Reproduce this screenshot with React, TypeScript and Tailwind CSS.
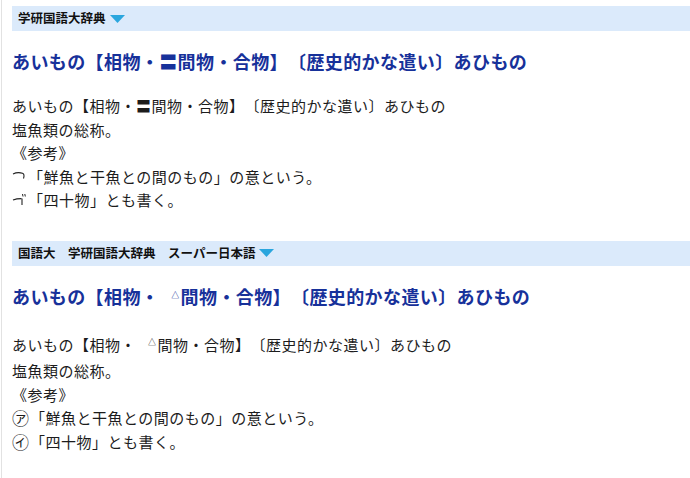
import React from "react";

const jp = { fontFamily: '"Noto Sans CJK JP", "Noto Sans", sans-serif' };

const Caret = () => (
    <svg width="15" height="8" viewBox="0 0 15 8" className="ml-1 inline-block">
        <path d="M0 0 L15 0 L7.5 8 Z" fill="#2aa6de" />
    </svg>
);

const BrokenA = () => (
    <svg width="16" height="14" viewBox="0 0 16 14" className="inline-block shrink-0 align-[-2px]">
        <path d="M1 5 C4 3.5 8 3.5 10.5 4.2 C12 4.8 12.3 7 11.5 9.5" fill="none" stroke="#222" strokeWidth="1.1" />
    </svg>
);

const BrokenI = () => (
    <svg width="16" height="14" viewBox="0 0 16 14" className="inline-block shrink-0 align-[-2px]">
        <path d="M1 7 C4 5.8 7 5.6 9.5 5.6" fill="none" stroke="#222" strokeWidth="1.1" />
        <path d="M10 5.5 L10 12" fill="none" stroke="#222" strokeWidth="1.1" />
        <path d="M10.5 1 L11 3.5 M12.8 1 L13.3 3.5" fill="none" stroke="#222" strokeWidth="1" />
    </svg>
);

const Geta = () => <span className="font-bold">〓</span>;

const Tri = () => <span className="relative -top-[6px] mx-[1px] ml-3 text-[8px]">△</span>;

const Circled = ({ ch }: { ch: string }) => (
    <span className="w-[18px] shrink-0 text-[17px] leading-none tracking-normal">{ch}</span>
);

const Header = ({ label }: { label: string }) => (
    <div className="flex h-[25px] items-center bg-[#dbeafb] pl-[6px] text-[12.5px] font-bold text-[#111]">
        <span className="whitespace-pre">{label}</span>
        <Caret />
    </div>
);

const Entry = ({ mark, first, second }: { mark: React.ReactNode; first: React.ReactNode; second: React.ReactNode }) => (
    <>
        <div className="mt-[17px] text-[18px] font-bold leading-[27px] tracking-[0.4px] text-[#17319a]">
            あいもの【相物・{mark}間物・合物】〔歴史的かな遣い〕あひもの
        </div>
        <div className="mt-[19px] text-[15px] leading-[23.5px] tracking-[0.5px] text-[#1c1c1c]">
            <div>あいもの【相物・{mark}間物・合物】〔歴史的かな遣い〕あひもの</div>
            <div>塩魚類の総称。</div>
            <div>《参考》</div>
            <div className="flex items-center">{first}<span>「鮮魚と干魚との間のもの」の意という。</span></div>
            <div className="flex items-center">{second}<span>「四十物」とも書く。</span></div>
        </div>
    </>
);

export default function App() {
    return (
        <div className="min-h-[478px] w-[690px] bg-white [text-spacing-trim:space-all]" style={jp}>
            <div className="ml-px min-h-[478px] border-l border-[#e2e2e2] pl-[10px] pt-[6px]">
                <Header label="学研国語大辞典" />
                <Entry mark={<Geta />} first={<BrokenA />} second={<BrokenI />} />

                <div className="mt-[29px]">
                    <Header label="国語大　学研国語大辞典　スーパー日本語" />
                    <Entry mark={<Tri />} first={<Circled ch="㋐" />} second={<Circled ch="㋑" />} />
                </div>
            </div>
        </div>
    );
}
